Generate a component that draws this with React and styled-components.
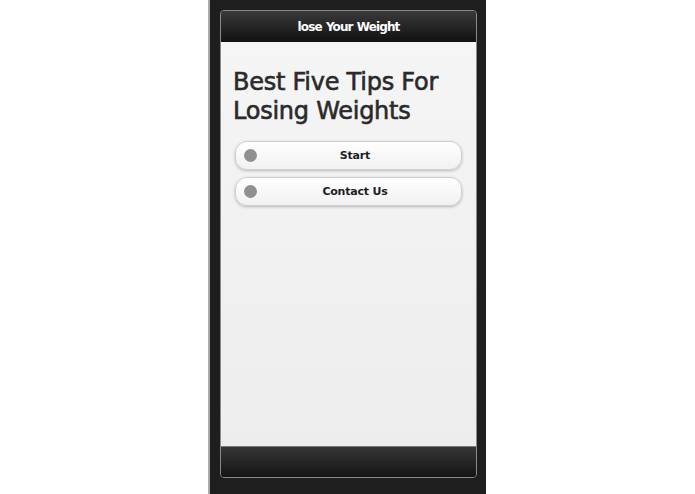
import styled, { createGlobalStyle } from 'styled-components';

const GlobalStyle = createGlobalStyle`
    html, body {
        margin: 0;
        padding: 0;
        background: #ffffff;
    }
    body {
        font-family: "DejaVu Sans", "Liberation Sans", sans-serif;
    }
`;

const menu = ['Start', 'Contact Us'];

const App = () => {
    return (
        <>
            <GlobalStyle />
            <Page>
                <PhoneFrame>
                    <Screen>
                        <Header>lose Your Weight</Header>
                        <Content>
                            <Title>Best Five Tips For Losing Weights</Title>
                            <ButtonList>
                                {menu.map((label) => (
                                    <MenuButton key={label}>
                                        <Dot />
                                        <ButtonLabel>{label}</ButtonLabel>
                                    </MenuButton>
                                ))}
                            </ButtonList>
                        </Content>
                        <Footer />
                    </Screen>
                </PhoneFrame>
            </Page>
        </>
    );
};

export default App;

const Page = styled.div`
    width: 695px;
    height: 494px;
    display: flex;
    padding-left: 208px;
    box-sizing: border-box;
`;

const PhoneFrame = styled.div`
    width: 278px;
    height: 494px;
    box-sizing: border-box;
    background: #1e1e1e;
    border-left: 2px solid #a9a9a9;
    padding: 10px 9px 16px 10px;
    display: flex;
`;

const Screen = styled.div`
    flex: 1;
    display: flex;
    flex-direction: column;
    border: 1px solid #8a8a8a;
    border-radius: 4px;
    overflow: hidden;
`;

// 상단 타이틀 바
const Header = styled.div`
    height: 31px;
    flex-shrink: 0;
    display: flex;
    align-items: center;
    justify-content: center;
    background: linear-gradient(#3a3a3a, #111111);
    color: #ffffff;
    font-size: 12px;
    font-weight: bold;
    letter-spacing: -0.9px;
    word-spacing: 1px;
`;

const Content = styled.div`
    flex: 1;
    background: linear-gradient(#f5f5f5, #ededed);
    padding: 26px 14px 0 12px;
    display: flex;
    flex-direction: column;
`;

const Title = styled.h2`
    margin: 0 0 15px 0;
    font-size: 24px;
    line-height: 29px;
    font-weight: normal;
    color: #2a2a2a;
    letter-spacing: -0.25px;
    -webkit-text-stroke: 0.6px #2a2a2a;
`;

const ButtonList = styled.div`
    display: flex;
    flex-direction: column;
    gap: 7px;
    padding: 0 0 0 2px;
`;

const MenuButton = styled.div`
    height: 29px;
    box-sizing: border-box;
    display: flex;
    align-items: center;
    padding: 0 8px;
    border: 1px solid #cfcfcf;
    border-radius: 12px;
    background: linear-gradient(#ffffff, #f1f1f1);
    box-shadow: 0 1px 3px rgba(0, 0, 0, 0.25);
`;

const Dot = styled.span`
    width: 13px;
    height: 13px;
    border-radius: 50%;
    background: #909090;
    flex-shrink: 0;
`;

const ButtonLabel = styled.span`
    flex: 1;
    text-align: center;
    font-size: 11px;
    font-weight: bold;
    color: #1e1e1e;
    letter-spacing: -0.2px;
`;

const Footer = styled.div`
    height: 30px;
    flex-shrink: 0;
    border-top: 1px solid #7a7a7a;
    background: linear-gradient(#363636, #141414);
`;
